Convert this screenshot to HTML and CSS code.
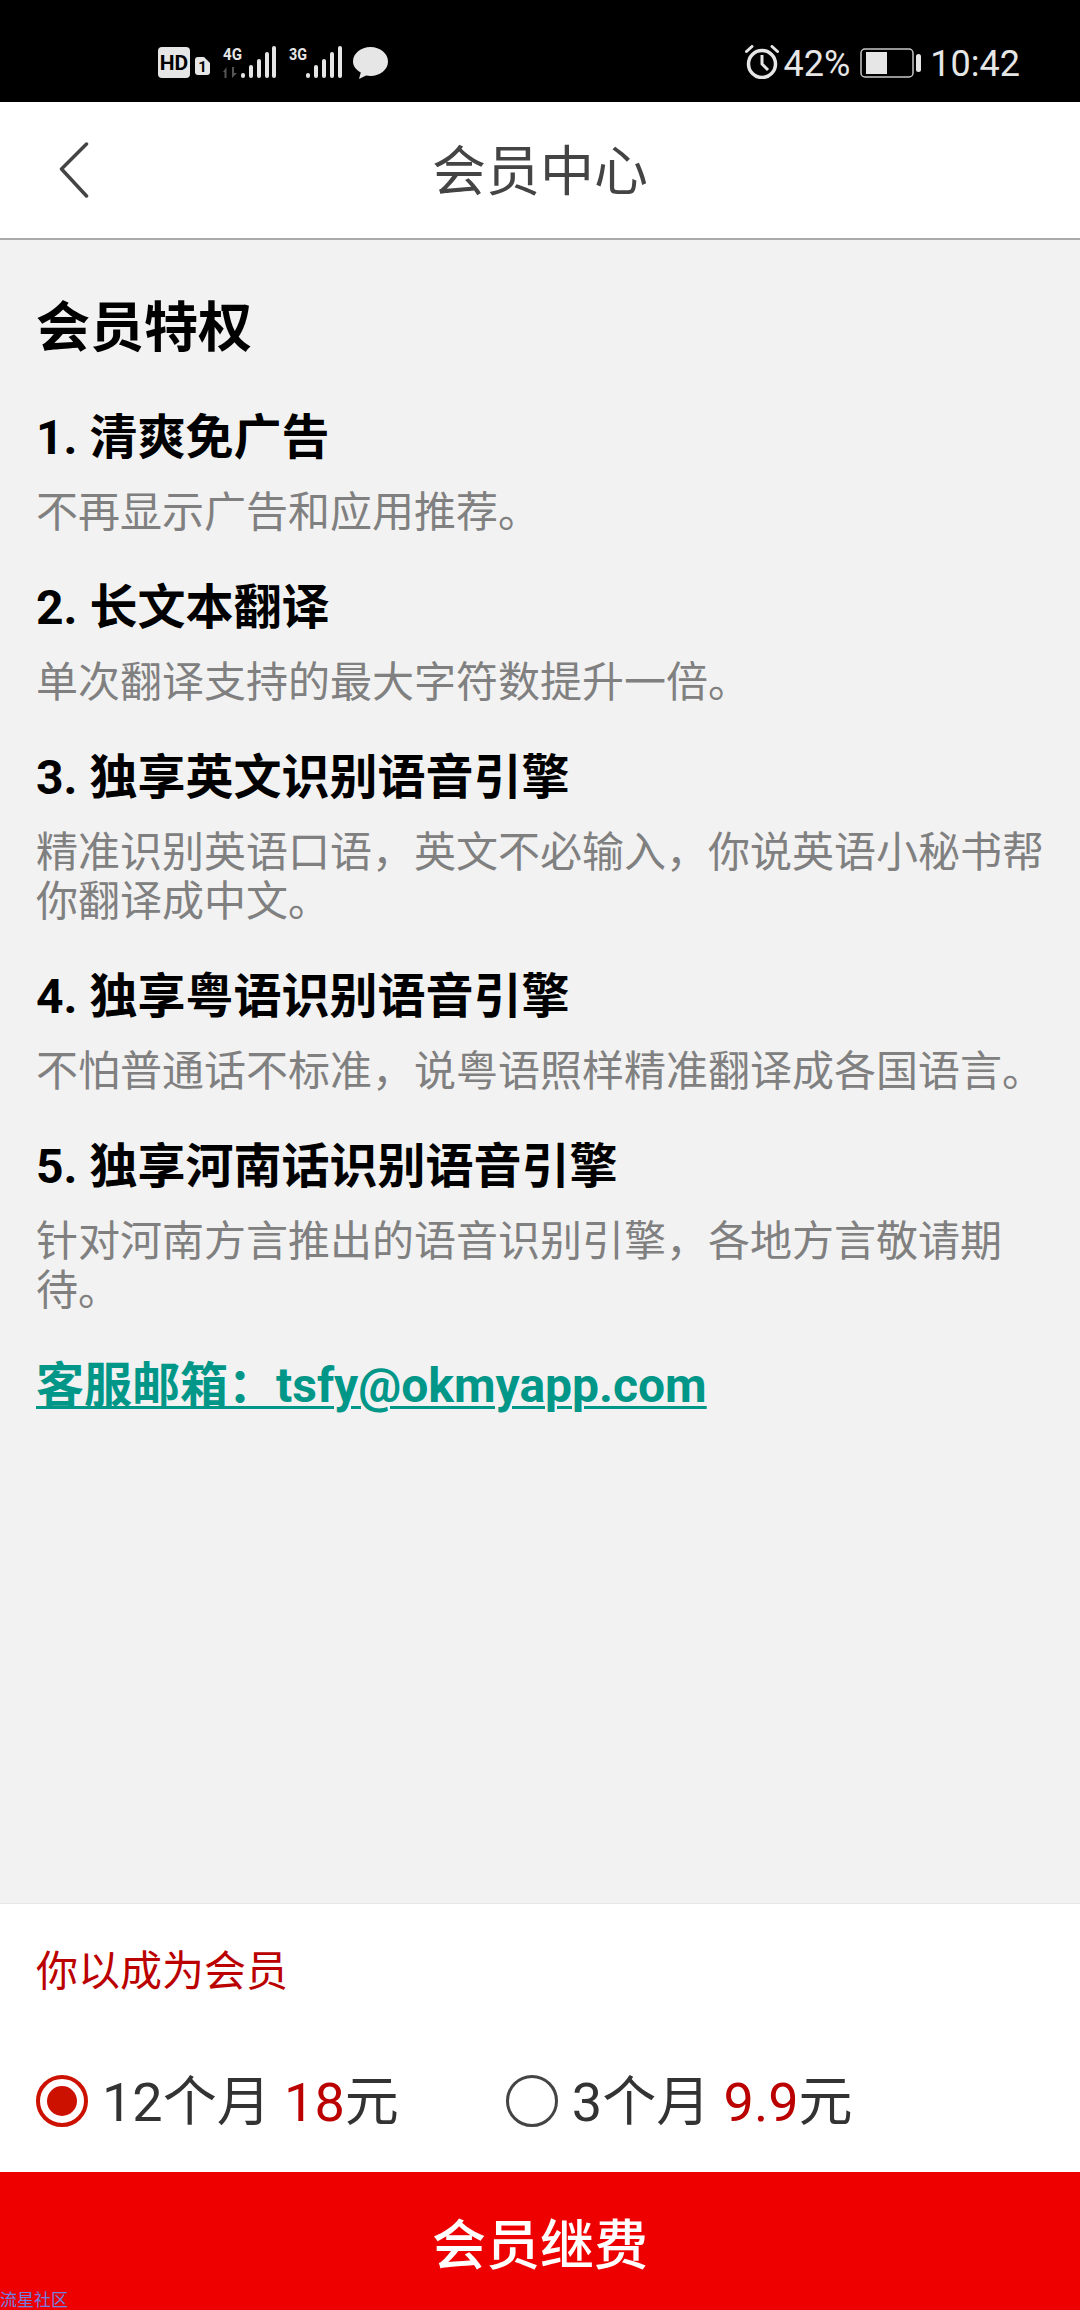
FILE: index.html
```html
<!DOCTYPE html>
<html lang="zh-CN">
<head>
<meta charset="utf-8">
<title>会员中心</title>
<link rel="stylesheet" href="styles.css">
</head>
<body>
<div class="page">
  <div class="status">
    <svg class="status-left" width="232" height="40" viewBox="158 44 232 40">
      <rect x="158" y="47" width="32" height="31" rx="4" fill="#e6e6e6"/>
      <text x="174" y="70" class="ic-hd" text-anchor="middle">HD</text>
      <path d="M195 60a3 3 0 0 1 3-3h6l6 6v9a3 3 0 0 1-3 3h-9a3 3 0 0 1-3-3z" fill="#e6e6e6"/>
      <text x="202.500" y="72" class="ic-sim" text-anchor="middle">1</text>
      <text x="223" y="60" class="ic-net" textLength="19" lengthAdjust="spacingAndGlyphs">4G</text>
      <path d="M223 72l3.500-5v11h-2v-6zM232 78v-11h2v6l3 0-5 5z" fill="#555"/>
      <g fill="#e6e6e6">
        <rect x="241" y="73" width="4" height="5" rx="2"/>
        <rect x="249" y="65" width="4" height="13" rx="2"/>
        <rect x="257" y="59" width="4" height="19" rx="2"/>
        <rect x="265" y="52" width="4" height="26" rx="2"/>
        <rect x="272" y="46" width="4" height="32" rx="2"/>
      </g>
      <text x="289" y="60" class="ic-net" textLength="18" lengthAdjust="spacingAndGlyphs">3G</text>
      <g fill="#e6e6e6">
        <rect x="306" y="73" width="4" height="5" rx="2"/>
        <rect x="314" y="65" width="4" height="13" rx="2"/>
        <rect x="322" y="59" width="4" height="19" rx="2"/>
        <rect x="330" y="52" width="4" height="26" rx="2"/>
        <rect x="338" y="46" width="4" height="32" rx="2"/>
      </g>
      <path d="M370.500 47c9.700 0 17.500 6.500 17.500 14.500S380.200 76 370.500 76c-1.500 0-3-.2-4.400-.5L359 79l1.800-6.500C356 70 353 66 353 61.500 353 53.500 360.800 47 370.500 47z" fill="#e6e6e6"/>
    </svg>
    <div class="status-right">
      <svg class="alarm" width="34" height="34" viewBox="0 0 34 34" fill="none" stroke="#e6e6e6">
        <circle cx="17" cy="19" r="13.500" stroke-width="3.500"/>
        <path d="M17 10v9l6 6" stroke-width="3"/>
        <path d="M1.500 6.500L7 1.500M32.500 6.500L27 1.500" stroke-width="3" stroke-linecap="round"/>
      </svg>
      <span class="st-pct">42%</span>
      <svg class="battery" width="61" height="30" viewBox="0 0 61 30">
        <rect x="1" y="1" width="52" height="28" rx="4" fill="none" stroke="#c8c8c8" stroke-width="1.500"/>
        <rect x="6" y="4" width="21" height="22" fill="#e6e6e6"/>
        <rect x="56" y="6" width="5" height="18" rx="2.500" fill="#e6e6e6"/>
      </svg>
      <span class="st-time">10:42</span>
    </div>
  </div>

  <header class="topbar">
    <svg class="back" width="32" height="56" viewBox="0 0 32 56" fill="none" stroke="#444" stroke-width="3.500" stroke-linecap="round" stroke-linejoin="round">
      <path d="M29.500 2L4.500 27l25 27"/>
    </svg>
    <h1 class="topbar-title">会员中心</h1>
  </header>

  <main class="content">
    <h2 class="heading">会员特权</h2>
    <section class="perk">
      <h3 class="perk-title">1. 清爽免广告</h3>
      <p class="perk-desc">不再显示广告和应用推荐。</p>
    </section>
    <section class="perk">
      <h3 class="perk-title">2. 长文本翻译</h3>
      <p class="perk-desc">单次翻译支持的最大字符数提升一倍。</p>
    </section>
    <section class="perk">
      <h3 class="perk-title">3. 独享英文识别语音引擎</h3>
      <p class="perk-desc">精准识别英语口语，英文不必输入，你说英语小秘书帮你翻译成中文。</p>
    </section>
    <section class="perk">
      <h3 class="perk-title">4. 独享粤语识别语音引擎</h3>
      <p class="perk-desc">不怕普通话不标准，说粤语照样精准翻译成各国语言。</p>
    </section>
    <section class="perk">
      <h3 class="perk-title">5. 独享河南话识别语音引擎</h3>
      <p class="perk-desc">针对河南方言推出的语音识别引擎，各地方言敬请期待。</p>
    </section>
    <a class="mail" href="#">客服邮箱：tsfy@okmyapp.com</a>
  </main>

  <section class="plans">
    <p class="plans-note">你以成为会员</p>
    <div class="plan-row">
      <div class="plan">
        <span class="radio radio-on"></span>
        <span class="plan-label">12个月 <em class="price">18</em>元</span>
      </div>
      <div class="plan">
        <span class="radio"></span>
        <span class="plan-label">3个月 <em class="price">9.9</em>元</span>
      </div>
    </div>
  </section>

  <div class="cta">会员继费</div>
  <span class="watermark">流星社区</span>
</div>
</body>
</html>
```
FILE: styles.css
```css
* { box-sizing: border-box; }
html, body { margin: 0; padding: 0; }
body { font-family: Roboto, "Noto Sans CJK SC", sans-serif; background: #f2f2f2; }
.page { position: relative; width: 1080px; height: 2310px; display: flex; flex-direction: column; overflow: hidden; }

.status { height: 102px; flex: none; background: #000; color: #e6e6e6; display: flex; align-items: center; justify-content: space-between; padding: 0 60px 0 158px; }
.status-left { display: block; margin-top: 26px; }
.ic-hd { font: 700 21px "Roboto", sans-serif; fill: #000; }
.ic-sim { font: 700 15px "Roboto", sans-serif; fill: #000; }
.ic-net { font: 700 16px "Roboto", sans-serif; fill: #e6e6e6; }
.status-right { display: flex; align-items: center; margin-top: 25px; }
.alarm { display: block; margin-right: 5px; margin-top: -4px; }
.st-pct, .st-time { font-size: 36px; line-height: 44px; }
.battery { display: block; margin: -2px 9px 0 10px; }

.topbar { height: 138px; flex: none; background: #fff; border-bottom: 2px solid #aaa; display: grid; grid-template-columns: 1fr auto 1fr; align-items: center; padding-left: 57px; padding-right: 57px; }
.back { display: block; }
.topbar-title { margin: 0; padding-top: 5px; font-size: 54px; line-height: 64px; font-weight: 400; color: #444; }

.content { flex: 1; background: #f2f2f2; padding: 57px 36px 0; display: flex; flex-direction: column; align-items: flex-start; }
.heading { margin: 0 0 47px; font-size: 54px; line-height: 64px; font-weight: 700; color: #000; }
.perk { margin-bottom: 41px; }
.perk-title { margin: 0 0 20px; font-size: 48px; line-height: 60px; font-weight: 700; color: #000; }
.perk-desc { margin: 0; font-size: 42px; line-height: 49px; color: #808080; }
.mail { margin-top: 0; font-size: 48px; line-height: 60px; font-weight: 700; color: #009688; text-decoration: underline; text-decoration-thickness: 3px; text-underline-offset: 4px; }

.plans { flex: none; background: #fff; border-top: 1px solid #e6e6e6; padding: 40px 36px 34px; }
.plans-note { margin: 0; font-size: 42px; line-height: 56px; color: #bb0000; }
.plan-row { display: flex; gap: 107px; margin-top: 64px; }
.plan { display: flex; align-items: center; gap: 14px; }
.radio { width: 52px; height: 52px; flex: none; border: 3px solid #444; border-radius: 50%; display: flex; align-items: center; justify-content: center; }
.radio-on { border: 4px solid #cc1100; }
.radio-on::after { content: ""; width: 30px; height: 30px; border-radius: 50%; background: #cc1100; }
.plan-label { padding-top: 4px; font-size: 54px; line-height: 70px; color: #333; }
.price { font-style: normal; color: #bb0000; }

.cta { flex: none; height: 138px; background: #ee0000; color: #fff; font-size: 54px; font-weight: 500; display: flex; align-items: center; justify-content: center; }
.watermark { position: absolute; left: 0; bottom: 0; font-size: 17px; line-height: 20px; color: #7080e0; }
```
